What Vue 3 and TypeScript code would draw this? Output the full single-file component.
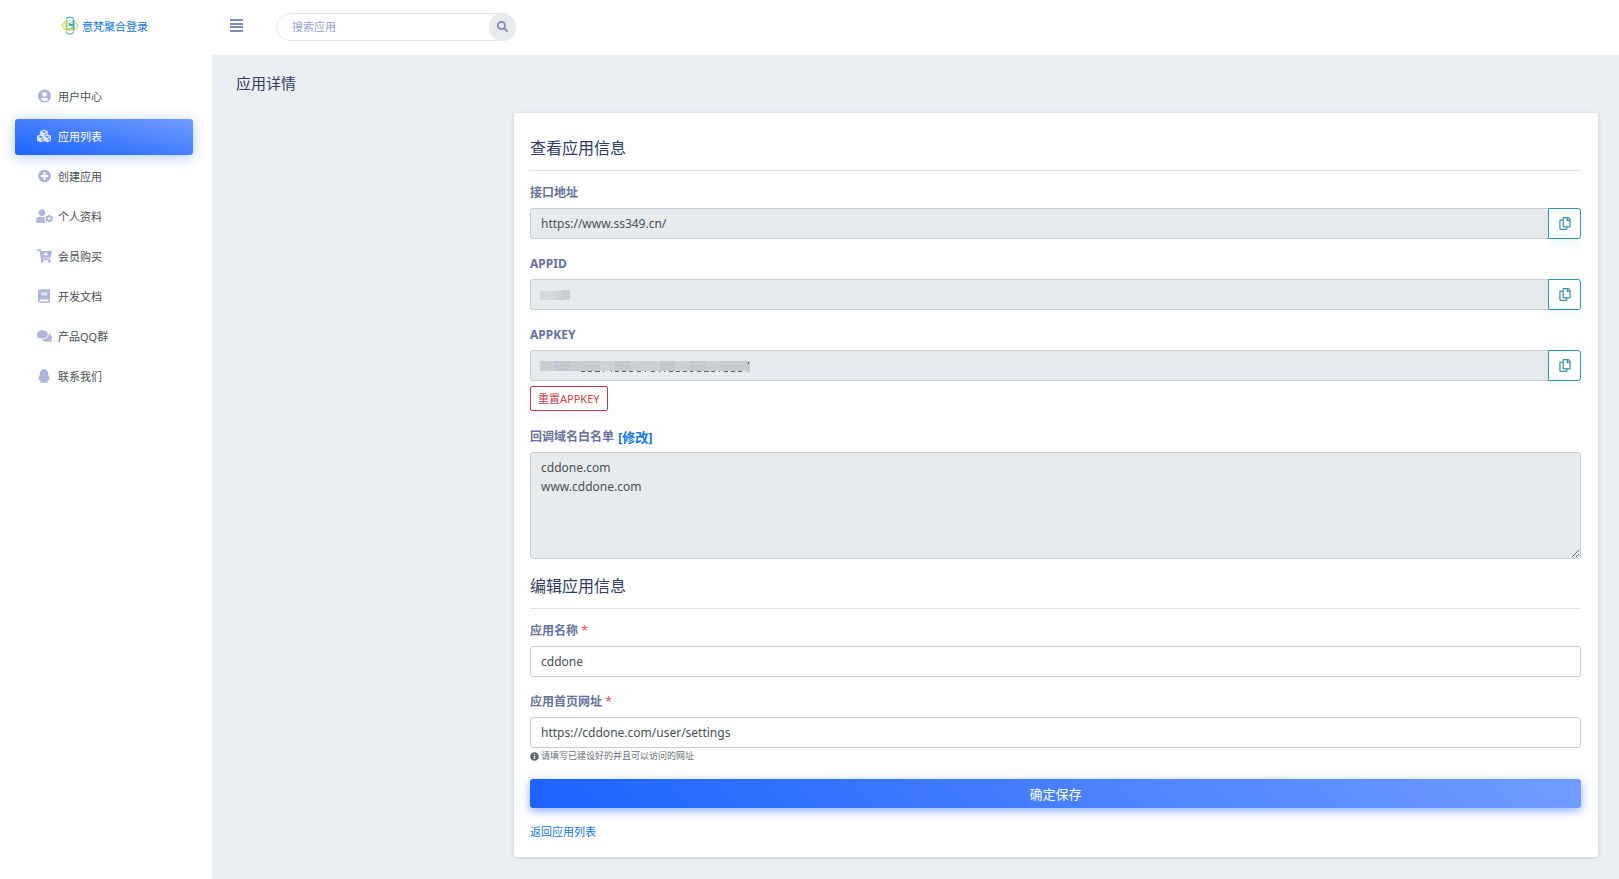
<script setup lang="ts">
import { ref } from 'vue'

interface Icon {
  box: string
  width: number
  path: string
}

interface NavItem {
  label: string
  icon: Icon
  active?: boolean
}

const navItems: NavItem[] = [
  {
    label: '用户中心',
    icon: {
      box: '0 0 496 512',
      width: 13,
      path: 'M248 8C111 8 0 119 0 256s111 248 248 248 248-111 248-248S385 8 248 8zm0 96c48.6 0 88 39.4 88 88s-39.4 88-88 88-88-39.4-88-88 39.4-88 88-88zm0 344c-58.7 0-111.3-26.6-146.5-68.2 18.8-35.4 55.6-59.8 98.5-59.8 2.4 0 4.8.4 7.1 1.1 13 4.2 26.6 6.9 40.9 6.9 14.3 0 28-2.7 40.9-6.9 2.3-.7 4.7-1.1 7.1-1.1 42.9 0 79.7 24.4 98.5 59.8C359.3 421.4 306.7 448 248 448z',
    },
  },
  {
    label: '应用列表',
    active: true,
    icon: {
      box: '0 0 512 512',
      width: 14,
      path: 'M488.6 250.2L392 214V105.5c0-15-9.3-28.4-23.4-33.7l-100-37.5c-8.1-3.1-17.1-3.1-25.3 0l-100 37.5c-14.1 5.3-23.4 18.7-23.4 33.7V214l-96.6 36.2C9.3 255.5 0 268.9 0 283.9V394c0 13.6 7.7 26.1 19.9 32.2l100 50c10.1 5.1 22.1 5.1 32.2 0l103.9-52 103.9 52c10.1 5.1 22.1 5.1 32.2 0l100-50c12.2-6.1 19.9-18.6 19.9-32.2V283.9c0-15-9.3-28.4-23.4-33.7zM358 214.8l-85 31.9v-68.2l85-37v73.3zM154 104.1l102-38.2 102 38.2v.6l-102 41.4-102-41.4v-.6zm84 291.1l-85 42.5v-79.1l85-38.8v75.4zm0-112l-102 41.4-102-41.4v-.6l102-38.2 102 38.2v.6zm240 112l-85 42.5v-79.1l85-38.8v75.4zm0-112l-102 41.4-102-41.4v-.6l102-38.2 102 38.2v.6z',
    },
  },
  {
    label: '创建应用',
    icon: {
      box: '0 0 512 512',
      width: 13,
      path: 'M256 8C119 8 8 119 8 256s111 248 248 248 248-111 248-248S393 8 256 8zm144 276c0 6.6-5.4 12-12 12h-92v92c0 6.6-5.4 12-12 12h-56c-6.6 0-12-5.4-12-12v-92h-92c-6.6 0-12-5.4-12-12v-56c0-6.6 5.4-12 12-12h92v-92c0-6.6 5.4-12 12-12h56c6.6 0 12 5.4 12 12v92h92c6.6 0 12 5.4 12 12v56z',
    },
  },
  {
    label: '个人资料',
    icon: {
      box: '0 0 640 512',
      width: 17,
      path: 'M610.5 373.3c2.6-14.1 2.6-28.5 0-42.6l25.8-14.9c3-1.7 4.3-5.2 3.3-8.5-6.7-21.6-18.2-41.2-33.2-57.4-2.3-2.5-6-3.1-9-1.4l-25.8 14.9c-10.9-9.3-23.4-16.5-36.9-21.3v-29.8c0-3.4-2.4-6.4-5.7-7.1-22.3-5-45-4.8-66.2 0-3.3.7-5.7 3.7-5.7 7.1v29.8c-13.5 4.8-26 12-36.9 21.3l-25.8-14.9c-2.9-1.7-6.7-1.1-9 1.4-15 16.2-26.5 35.8-33.2 57.4-1 3.3.4 6.8 3.3 8.5l25.8 14.9c-2.6 14.1-2.6 28.5 0 42.6l-25.8 14.9c-3 1.7-4.3 5.2-3.3 8.5 6.7 21.6 18.2 41.1 33.2 57.4 2.3 2.5 6 3.1 9 1.4l25.8-14.9c10.9 9.3 23.4 16.5 36.9 21.3v29.8c0 3.4 2.4 6.4 5.7 7.1 22.3 5 45 4.8 66.2 0 3.3-.7 5.7-3.7 5.7-7.1v-29.8c13.5-4.8 26-12 36.9-21.3l25.8 14.9c2.9 1.7 6.7 1.1 9-1.4 15-16.2 26.5-35.8 33.2-57.4 1-3.3-.4-6.8-3.3-8.5l-25.8-14.9zM496 400.5c-26.8 0-48.5-21.8-48.5-48.5s21.8-48.5 48.5-48.5 48.5 21.8 48.5 48.5-21.7 48.5-48.5 48.5zM224 256c70.7 0 128-57.3 128-128S294.7 0 224 0 96 57.3 96 128s57.3 128 128 128zm201.2 226.5c-2.3-1.2-4.6-2.6-6.8-3.9l-7.9 4.6c-6 3.4-12.8 5.3-19.6 5.3-10.9 0-21.4-4.6-28.9-12.6-18.3-19.8-32.3-43.9-40.2-69.6-5.5-17.7 1.9-36.4 17.9-45.7l7.9-4.6c-.1-2.6-.1-5.2 0-7.8l-7.9-4.6c-16-9.2-23.4-28-17.9-45.7.9-2.9 2.2-5.8 3.2-8.7-3.8-.3-7.5-1.2-11.4-1.2h-16.7c-22.2 10.2-46.9 16-72.9 16s-50.6-5.8-72.9-16h-16.7C60.2 288 0 348.2 0 422.4V464c0 26.5 21.5 48 48 48h352c10.1 0 19.5-3.2 27.2-8.5-1.2-3.8-2-7.7-2-11.8v-9.2z',
    },
  },
  {
    label: '会员购买',
    icon: {
      box: '0 0 576 512',
      width: 15,
      path: 'M504.717 320H211.572l6.545 32h268.418c15.401 0 26.816 14.301 23.403 29.319l-5.517 24.276C523.112 414.668 536 433.828 536 456c0 31.202-25.519 56.444-56.824 55.994-29.823-.429-54.35-24.631-55.155-54.447-.44-16.287 6.085-31.049 16.803-41.548H231.176C241.553 426.165 248 440.326 248 456c0 31.813-26.528 57.431-58.67 55.938-28.54-1.325-51.751-24.385-53.251-52.917-1.158-22.034 10.436-41.455 28.051-51.586L93.883 64H24C10.745 64 0 53.255 0 40V24C0 10.745 10.745 0 24 0h102.529c11.401 0 21.228 8.021 23.513 19.19L159.208 64H551.99c15.401 0 26.816 14.301 23.403 29.319l-47.273 208C525.637 312.246 515.923 320 504.717 320zM408 168h-48v-40c0-8.837-7.163-16-16-16h-16c-8.837 0-16 7.163-16 16v40h-48c-8.837 0-16 7.163-16 16v16c0 8.837 7.163 16 16 16h48v40c0 8.837 7.163 16 16 16h16c8.837 0 16-7.163 16-16v-40h48c8.837 0 16-7.163 16-16v-16c0-8.837-7.163-16-16-16z',
    },
  },
  {
    label: '开发文档',
    icon: {
      box: '0 0 448 512',
      width: 12,
      path: 'M448 360V24c0-13.3-10.7-24-24-24H96C43 0 0 43 0 96v320c0 53 43 96 96 96h328c13.3 0 24-10.7 24-24v-16c0-7.5-3.5-14.3-8.9-18.7-4.2-15.4-4.2-59.3 0-74.7 5.4-4.3 8.9-11.1 8.9-18.6zM128 134c0-3.3 2.7-6 6-6h212c3.3 0 6 2.7 6 6v20c0 3.3-2.7 6-6 6H134c-3.3 0-6-2.7-6-6v-20zm0 64c0-3.3 2.7-6 6-6h212c3.3 0 6 2.7 6 6v20c0 3.3-2.7 6-6 6H134c-3.3 0-6-2.7-6-6v-20zm253.4 250H96c-17.7 0-32-14.3-32-32 0-17.6 14.4-32 32-32h285.4c-1.9 17.1-1.9 46.9 0 64z',
    },
  },
  {
    label: '产品QQ群',
    icon: {
      box: '0 0 576 512',
      width: 15,
      path: 'M416 192c0-88.4-93.1-160-208-160S0 103.6 0 192c0 34.3 14.1 65.9 38 92-13.4 30.2-35.5 54.2-35.8 54.5-2.2 2.3-2.8 5.7-1.5 8.7S4.8 352 8 352c36.6 0 66.9-12.3 88.7-25 32.2 15.7 70.3 25 111.3 25 114.9 0 208-71.6 208-160zm122 220c23.9-26 38-57.7 38-92 0-66.9-53.5-124.2-129.3-148.1.9 6.6 1.3 13.3 1.3 20.1 0 105.9-107.7 192-240 192-10.8 0-21.3-.8-31.7-1.9C207.8 439.6 281.8 480 368 480c41 0 79.1-9.2 111.3-25 21.8 12.7 52.1 25 88.7 25 3.2 0 6.1-1.9 7.3-4.8 1.3-2.9.7-6.3-1.5-8.7-.3-.3-22.4-24.2-35.8-54.5z',
    },
  },
  {
    label: '联系我们',
    icon: {
      box: '0 0 448 512',
      width: 12,
      path: 'M433.754 420.445c-11.526 1.393-44.86-52.741-44.86-52.741 0 31.345-16.136 72.247-51.051 101.786 16.842 5.192 54.843 19.167 45.803 34.421-7.316 12.343-125.51 7.881-159.632 4.037-34.122 3.844-152.316 8.306-159.632-4.037-9.045-15.25 28.918-29.214 45.783-34.415-34.92-29.539-51.059-70.445-51.059-101.792 0 0-33.334 54.134-44.859 52.741-5.37-.65-12.424-29.644 9.347-99.704 10.261-33.024 21.995-60.478 40.144-105.779C60.683 98.063 108.982.006 224 0c113.737.006 163.156 96.133 160.264 214.963 18.118 45.223 29.912 72.85 40.144 105.778 21.768 70.06 14.716 99.053 9.346 99.704z',
    },
  },
]

const copyPath =
  'M433.941 65.941l-51.882-51.882A48 48 0 0 0 348.118 0H176c-26.51 0-48 21.49-48 48v48H48c-26.51 0-48 21.49-48 48v320c0 26.51 21.49 48 48 48h224c26.51 0 48-21.49 48-48v-48h80c26.51 0 48-21.49 48-48V99.882a48 48 0 0 0-14.059-33.941zM266 464H54a6 6 0 0 1-6-6V150a6 6 0 0 1 6-6h74v224c0 26.51 21.49 48 48 48h96v42a6 6 0 0 1-6 6zm128-96H182a6 6 0 0 1-6-6V54a6 6 0 0 1 6-6h106v88c0 13.255 10.745 24 24 24h88v202a6 6 0 0 1-6 6zm6-256h-64V48h9.632c1.591 0 3.117.632 4.243 1.757l48.368 48.368a6 6 0 0 1 1.757 4.243V112z'

// Shades of the blocks that hide the secret values, 15px each.
const keyBlocks = ['#cbcdcf', '#c4c7cf', '#c9cccf', '#c6c9cc', '#cfd2d4', '#c5c8cb', '#cdcfd3', '#ced1d4', '#c4c7ca', '#cdd0d3', '#c6c9cc', '#cccfd2', '#c8cbce', '#c6c9cd']

// Remains of the characters under the blocks: [x, width].
const keyMarks: [number, number][] = [
  [45, 4], [52, 4], [59, 5], [67, 1], [75, 1], [79, 4], [86, 4], [93, 4], [101, 4], [109, 1], [115, 4], [123, 1],
  [128, 1], [133, 4], [140, 4], [147, 4], [154, 3], [161, 4], [168, 5], [175, 4], [183, 1], [188, 4], [195, 4], [202, 4],
]

const search = ref('')
const apiUrl = ref('https://www.ss349.cn/')
const appId = ref('')
const appKey = ref('')
const domains = ref('cddone.com\nwww.cddone.com')
const appName = ref('cddone')
const homepage = ref('https://cddone.com/user/settings')

function copy(text: string) {
  navigator.clipboard?.writeText(text)
}
</script>

<template>
  <div class="page">
    <header class="topbar">
      <a class="brand" href="#">
        <svg class="brand-mark" viewBox="0 0 36 38" aria-hidden="true">
          <g fill="none" stroke-linejoin="round">
            <path d="M8 11 2 19l6 8" stroke="#d2dd68" stroke-width="2.5" />
            <path d="M28 11l6 8-6 8" stroke="#d2dd68" stroke-width="2.5" />
            <path d="M10 7c2-4 5-5 8-5s6 1 8 5" stroke="#4cb3ba" stroke-width="2.5" />
            <path d="M10 31c2 4 5 5 8 5s6-1 8-5" stroke="#74bd91" stroke-width="2.5" />
            <path d="M11 8v19h9v-4" stroke="#b4cf48" stroke-width="4" />
            <path d="M17 14v4h7M25 8v21" stroke="#3bb2b8" stroke-width="4" />
          </g>
        </svg>
        <span>意梵聚合登录</span>
      </a>
      <button class="menu-toggle" type="button" aria-label="菜单">
        <svg viewBox="0 0 13 13" aria-hidden="true">
          <path d="M0 0h13v2H0zM0 4h13v2H0zM0 7h13v2H0zM0 11h13v2H0z" />
        </svg>
      </button>
      <form class="search" @submit.prevent>
        <input v-model="search" type="text" placeholder="搜索应用" aria-label="搜索应用" />
        <button type="submit" aria-label="搜索">
          <svg viewBox="0 0 512 512" aria-hidden="true">
            <path d="M505 442.7L405.3 343c-4.5-4.5-10.6-7-17-7H372c27.6-35.3 44-79.7 44-128C416 93.1 322.9 0 208 0S0 93.1 0 208s93.1 208 208 208c48.3 0 92.7-16.4 128-44v16.3c0 6.4 2.5 12.5 7 17l99.7 99.7c9.4 9.4 24.6 9.4 33.9 0l28.3-28.3c9.4-9.4 9.4-24.6.1-34zM208 336c-70.7 0-128-57.2-128-128 0-70.7 57.2-128 128-128 70.7 0 128 57.2 128 128 0 70.7-57.2 128-128 128z" />
          </svg>
        </button>
      </form>
    </header>

    <div class="body">
      <nav class="sidebar">
        <a v-for="item in navItems" :key="item.label" class="nav-item" :class="{ active: item.active }" href="#">
          <span class="nav-icon">
            <svg :viewBox="item.icon.box" :width="item.icon.width" height="14" aria-hidden="true">
              <path :d="item.icon.path" />
            </svg>
          </span>
          <span>{{ item.label }}</span>
        </a>
      </nav>

      <main class="main">
        <h1>应用详情</h1>
        <div class="card">
          <h2>查看应用信息</h2>
          <div class="field">
            <label for="api-url">接口地址</label>
            <div class="group">
              <input id="api-url" v-model="apiUrl" type="text" readonly />
              <button type="button" aria-label="复制接口地址" @click="copy(apiUrl)">
                <svg viewBox="0 0 448 512" aria-hidden="true"><path :d="copyPath" /></svg>
              </button>
            </div>
          </div>
          <div class="field">
            <label for="app-id">APPID</label>
            <div class="group">
              <input id="app-id" v-model="appId" type="text" readonly />
              <svg class="mask" width="32" height="12" viewBox="0 0 32 12" aria-hidden="true">
                <path d="M0 2h15v9H0z" fill="#d5d9dc" />
                <path d="M15 2l8-1v10h-8z" fill="#ced2d5" />
                <path d="M23 1h7v9l-7 1z" fill="#c9cdd0" />
              </svg>
              <button type="button" aria-label="复制APPID" @click="copy(appId)">
                <svg viewBox="0 0 448 512" aria-hidden="true"><path :d="copyPath" /></svg>
              </button>
            </div>
          </div>
          <div class="field">
            <label for="app-key">APPKEY</label>
            <div class="group">
              <input id="app-key" v-model="appKey" type="text" readonly />
              <svg class="mask" width="212" height="14" viewBox="0 0 212 14" aria-hidden="true">
                <rect v-for="(shade, i) in keyBlocks" :key="i" :x="i * 15" y="1" width="15" height="10" :fill="shade" />
                <rect v-for="([x, w], i) in keyMarks" :key="'m' + i" :x="x - 4" y="11" :width="w" height="1" fill="#5b5f68" />
                <path d="M204 2h6v11l-6-2z" fill="#c6c9cd" />
                <path d="M208 2h1v2h-1z" fill="#5b5f68" />
              </svg>
              <button type="button" aria-label="复制APPKEY" @click="copy(appKey)">
                <svg viewBox="0 0 448 512" aria-hidden="true"><path :d="copyPath" /></svg>
              </button>
            </div>
            <button class="reset" type="button">重置APPKEY</button>
          </div>
          <div class="field">
            <div class="label-row">
              <label for="domains">回调域名白名单</label>
              <a href="#">[修改]</a>
            </div>
            <textarea id="domains" v-model="domains" rows="5" readonly></textarea>
          </div>

          <h2>编辑应用信息</h2>
          <div class="field">
            <label for="app-name">应用名称 <span class="required">*</span></label>
            <input id="app-name" v-model="appName" type="text" required />
          </div>
          <div class="field">
            <label for="homepage">应用首页网址 <span class="required">*</span></label>
            <input id="homepage" v-model="homepage" type="text" required />
            <p class="hint">
              <svg viewBox="0 0 512 512" aria-hidden="true">
                <path d="M256 8C119.043 8 8 119.083 8 256c0 136.997 111.043 248 248 248s248-111.003 248-248C504 119.083 392.957 8 256 8zm0 110c23.196 0 42 18.804 42 42s-18.804 42-42 42-42-18.804-42-42 18.804-42 42-42zm56 254c0 6.627-5.373 12-12 12h-88c-6.627 0-12-5.373-12-12v-24c0-6.627 5.373-12 12-12h12v-64h-12c-6.627 0-12-5.373-12-12v-24c0-6.627 5.373-12 12-12h64c6.627 0 12 5.373 12 12v100h12c6.627 0 12 5.373 12 12v24z" />
              </svg>
              <span>请填写已建设好的并且可以访问的网址</span>
            </p>
          </div>
          <button class="save" type="button">确定保存</button>
          <a class="back" href="#">返回应用列表</a>
        </div>
      </main>
    </div>
  </div>
</template>

<style>
body {
  margin: 0;
  background: #ebeff4;
}
</style>

<style scoped>
* {
  box-sizing: border-box;
}

.page {
  display: flex;
  flex-direction: column;
  min-height: 100vh;
  font-family: "Noto Sans", "Noto Sans CJK SC", sans-serif;
  font-size: 12px;
  color: #495057;
}

a {
  color: #0f76e6;
  text-decoration: none;
}

button,
input,
textarea {
  margin: 0;
  font-family: inherit;
}

button {
  cursor: pointer;
}

.topbar {
  display: flex;
  align-items: center;
  height: 55px;
  padding-bottom: 2px;
  background: #fff;
}

.brand {
  display: flex;
  align-items: center;
  gap: 3px;
  width: 230px;
  height: 51px;
  align-self: flex-start;
  padding-left: 61px;
  font-size: 11px;
}

.brand-mark {
  width: 18px;
  height: 19px;
}

.menu-toggle {
  display: flex;
  align-self: flex-start;
  align-items: center;
  height: 51px;
  padding: 0;
  border: 0;
  background: none;
}

.menu-toggle svg {
  width: 13px;
  height: 13px;
  fill: #7f8bb9;
}

.search {
  display: flex;
  width: 240px;
  height: 28px;
  margin-left: 33px;
  border: 1px solid #e4e8ec;
  border-radius: 14px;
}

.search input {
  flex: 1;
  min-width: 0;
  padding: 0 0 0 15px;
  border: 0;
  background: none;
  font-size: 11px;
  outline: none;
}

.search input::placeholder {
  color: #98a2d0;
  opacity: 1;
}

.search button {
  display: flex;
  align-items: center;
  justify-content: center;
  width: 27px;
  margin: -1px;
  padding: 0;
  border: 0;
  border-radius: 14px;
  background: #e8ebee;
}

.search svg {
  width: 11px;
  height: 11px;
  fill: #7f8bb9;
}

.body {
  display: flex;
  flex: 1;
}

.sidebar {
  display: flex;
  flex: none;
  flex-direction: column;
  gap: 4px;
  width: 212px;
  padding: 24px 19px 24px 15px;
  background: #fff;
}

.nav-item {
  display: flex;
  align-items: center;
  gap: 5px;
  height: 36px;
  padding: 0 0 3px 20px;
  border-radius: 3px;
  color: #4a4d57;
  font-size: 11px;
}

.nav-icon {
  display: flex;
  justify-content: center;
  width: 18px;
}

.nav-icon svg {
  fill: #afb5d9;
}

.nav-item.active {
  background: linear-gradient(to top right, #1b63ff, #729cff);
  box-shadow: 0 2px 14px rgba(64, 122, 255, 0.4);
  color: #fff;
}

.nav-item.active svg {
  fill: #dfe7ff;
  stroke: #dfe7ff;
  stroke-width: 16;
}

.main {
  display: flex;
  flex: 1;
  flex-direction: column;
  min-width: 0;
  padding: 17px 21px 19px 24px;
}

h1,
h2 {
  margin: 0;
  color: #323d62;
  font-weight: 400;
}

h1 {
  font-size: 15px;
  line-height: 22px;
}

.card {
  display: flex;
  flex-direction: column;
  margin: 19px 0 0 278px;
  padding: 24px 17px 16px 16px;
  border-radius: 3px;
  background: #fff;
  box-shadow: 0 1px 4px rgba(50, 60, 80, 0.2);
}

h2 {
  margin-bottom: 13px;
  padding-bottom: 10px;
  border-bottom: 1px solid #e0e2e5;
  font-size: 16px;
  line-height: 23px;
}

.field {
  display: flex;
  flex-direction: column;
  margin-bottom: 16px;
}

.field label,
.label-row {
  color: #67719b;
  font-size: 12px;
  font-weight: 700;
  line-height: 18px;
}

.field > label,
.label-row {
  margin-bottom: 6px;
}

.label-row {
  display: flex;
  gap: 4px;
}

.label-row a {
  font-size: 13px;
}

.required {
  color: #e5534b;
  font-weight: 400;
}

.group {
  position: relative;
  display: flex;
}

.field input {
  width: 100%;
  height: 31px;
  padding: 0 10px;
  border: 1px solid #c9ced3;
  border-radius: 3px;
  background: #fff;
  color: #495057;
  font-size: 12px;
}

.group input {
  flex: 1;
  min-width: 0;
  border-right: 0;
  border-radius: 3px 0 0 3px;
  background: #e8ebee;
}

.group button {
  display: flex;
  align-items: center;
  justify-content: center;
  width: 33px;
  padding: 0;
  border: 1px solid #2a98a8;
  border-radius: 0 3px 3px 0;
  background: #fff;
  box-shadow: 0 4px 8px rgba(80, 160, 200, 0.08);
}

.group button svg {
  width: 12px;
  height: 13px;
  fill: #3a93a6;
}

.mask {
  position: absolute;
  top: 10px;
  left: 10px;
}

.reset {
  align-self: flex-start;
  height: 25px;
  margin: 5px 0 1px;
  padding: 0 7px 2px;
  border: 1px solid #c23a4b;
  border-radius: 2px;
  background: #fff;
  box-shadow: 0 4px 8px rgba(80, 100, 160, 0.06);
  color: #c8434f;
  font-size: 11px;
}

textarea {
  display: block;
  width: 100%;
  padding: 5px 10px;
  border: 1px solid #c9ced3;
  border-radius: 3px;
  background: #e8ebee;
  color: #495057;
  font-size: 12px;
  line-height: 19px;
  resize: vertical;
}

.hint {
  display: flex;
  align-items: center;
  gap: 2px;
  margin: 1px 0 0;
  color: #6a7178;
  font-size: 9px;
  line-height: 14px;
}

.hint svg {
  width: 9px;
  height: 9px;
  fill: #5f666d;
}

.save {
  height: 29px;
  border: 0;
  border-radius: 3px;
  background: linear-gradient(45deg, #1b63ff, #729cff);
  box-shadow: 0 3px 10px rgba(64, 122, 255, 0.6);
  color: #fff;
  font-size: 13px;
}

.back {
  align-self: flex-start;
  margin-top: 15px;
  font-size: 11px;
  line-height: 18px;
}
</style>
